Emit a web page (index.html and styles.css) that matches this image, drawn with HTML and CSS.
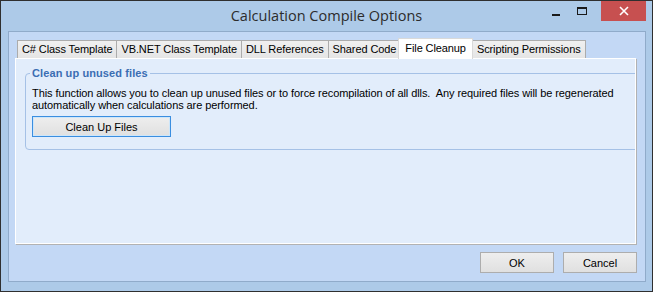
FILE: index.html
```html
<!DOCTYPE html>
<html lang="en">
<head>
    <meta charset="UTF-8">
    <meta name="viewport" content="width=device-width, initial-scale=1.0">
    <title>Calculation Compile Options</title>
    <link rel="stylesheet" href="styles.css">
</head>
<body>
    <div class="window">
        <div class="titlebar">
            <span></span>
            <div class="title">Calculation Compile Options</div>
            <div class="controls">
                <div class="ctl min"><span></span></div>
                <div class="ctl max"><span></span></div>
                <div class="ctl close">
                    <svg width="10" height="10" viewBox="0 0 10 10"><path d="M1 1 L9 9 M9 1 L1 9" stroke="#fff" stroke-width="1.6"/></svg>
                </div>
            </div>
        </div>
        <div class="client">
            <div class="tabs">
                <div class="tab">C# Class Template</div>
                <div class="tab">VB.NET Class Template</div>
                <div class="tab">DLL References</div>
                <div class="tab">Shared Code</div>
                <div class="tab active">File Cleanup</div>
                <div class="tab">Scripting Permissions</div>
            </div>
            <div class="panel">
                <fieldset class="group">
                    <legend>Clean up unused files</legend>
                    <p>This function allows you to clean up unused files or to force recompilation of all dlls.&nbsp; Any required files will be regenerated automatically when calculations are performed.</p>
                    <button class="btn focus">Clean Up Files</button>
                </fieldset>
            </div>
            <div class="footer">
                <button class="btn">OK</button>
                <button class="btn">Cancel</button>
            </div>
        </div>
    </div>
</body>
</html>
```

FILE: styles.css
```css
*{
    margin: 0;
    padding: 0;
    box-sizing: border-box;
}
body{
    background-color: #fff;
    font-family: "Liberation Sans", Arial, sans-serif;
    font-size: 11px;
    color: #000;
}
.window{
    width: 653px;
    height: 292px;
    border: 1px solid #2f2f2f;
    background-color: #adcae8;
    display: flex;
    flex-direction: column;
}
.titlebar{
    height: 30px;
    display: grid;
    grid-template-columns: 1fr auto 1fr;
}
.title{
    font-family: "Open Sans", sans-serif;
    font-size: 14.5px;
    color: #2c2c2c;
    line-height: 30px;
}
.controls{
    display: flex;
    justify-content: flex-end;
    align-items: flex-start;
    padding-right: 6px;
}
.ctl{
    width: 26px;
    height: 20px;
    display: flex;
    justify-content: center;
    align-items: center;
}
.min span{
    width: 8px;
    height: 2px;
    background-color: #1a1a1a;
    margin-top: 8px;
}
.max span{
    width: 10px;
    height: 8px;
    border: 1px solid #1a1a1a;
    border-top-width: 2px;
}
.close{
    width: 45px;
    margin-left: 6px;
    background-color: #c75050;
}
.client{
    flex: 1;
    margin: 0 6px 9px 7px;
    border: 1px solid #90abca;
    background-color: #c3d8f5;
    padding: 6px 8px 8px 6px;
    display: flex;
    flex-direction: column;
}
.tabs{
    display: flex;
    align-items: flex-end;
    height: 20px;
    padding-left: 2px;
    position: relative;
    z-index: 1;
}
.tab{
    height: 18px;
    line-height: 17px;
    padding: 0 4px;
    border: 1px solid #acacac;
    border-bottom: none;
    background: linear-gradient(#f0f0f0, #e5e5e5);
    margin-right: -1px;
    white-space: nowrap;
    letter-spacing: -0.1px;
}
.tab.active{
    height: 21px;
    line-height: 19px;
    margin: 0 -1px -1px -2px;
    padding: 0 6px;
    background: #fff;
    border-color: #d9d9d9;
    position: relative;
}
.panel{
    flex: 1;
    background-color: #e2edfb;
    border: 1px solid #fff;
    box-shadow: 1px 1px 0 #b2b2b2;
    margin-right: 1px;
    overflow: hidden;
    padding: 8px 0 0 9px;
}
.group{
    border: 1px solid #a5c1e6;
    border-radius: 4px;
    margin-right: -10px;
    padding: 0 6px 12px 6px;
    min-width: 0;
}
.group legend{
    font-weight: bold;
    font-size: 11px;
    letter-spacing: 0.1px;
    color: #3b6eb3;
    padding: 0 2px;
    margin-left: -2px;
}
.group p{
    line-height: 12px;
    width: 600px;
    letter-spacing: -0.08px;
    padding-top: 8px;
    margin-bottom: 5px;
}
.btn{
    font-family: "Liberation Sans", Arial, sans-serif;
    font-size: 11px;
    color: #000;
    height: 21px;
    width: 74px;
    border: 1px solid #adadad;
    background: linear-gradient(#eeeeee, #e0e0e0);
}
.btn.focus{
    width: 139px;
    border-color: #3a8ee0;
    box-shadow: inset 0 0 0 1px #cde6fa;
}
.footer{
    display: flex;
    justify-content: flex-end;
    gap: 9px;
    margin-top: 8px;
}
```
